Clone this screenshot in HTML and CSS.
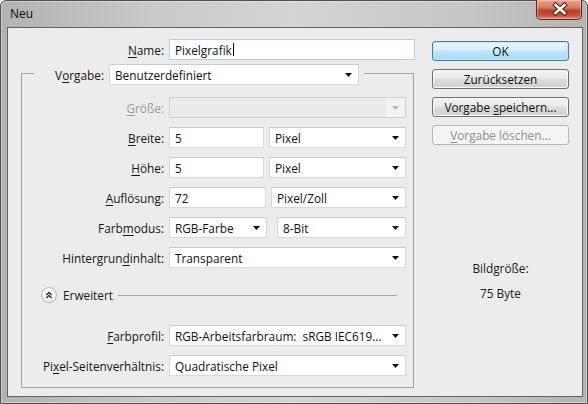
FILE: index.html
```html
<!DOCTYPE html>
<html lang="de">
<head>
<meta charset="utf-8">
<title>Neu</title>
<link rel="stylesheet" href="styles.css">
</head>
<body>
<div class="window">
  <div class="titlebar">
    <span class="title">Neu</span>
    <div class="close">
      <svg width="46" height="19" viewBox="0 0 46 19">
        <path d="M18.5 5 L27.5 13 M27.5 5 L18.5 13" stroke="#4b1f17" stroke-width="4.6" stroke-linecap="square" fill="none"/>
        <path d="M18.5 5 L27.5 13 M27.5 5 L18.5 13" stroke="#ffffff" stroke-width="2.6" stroke-linecap="square" fill="none"/>
      </svg>
    </div>
  </div>
  <div class="client">
    <div class="main">
      <div class="name-row">
        <span class="lbl name-lbl"><u>N</u>ame:</span>
        <div class="field input focused"><span>Pixelgrafik</span><span class="caret"></span></div>
      </div>
      <fieldset class="group">
        <legend class="legend">
          <div class="legend-inner">
            <span class="lbl legend-lbl">V<u>o</u>rgabe:</span>
            <div class="field select preset"><span>Benutzerdefiniert</span><svg class="arrow" width="7" height="4" viewBox="0 0 7 4"><polygon points="0,0 7,0 3.5,4" fill="#111"/></svg></div>
          </div>
        </legend>
        <div class="rows">
          <span class="lbl disabled"><u>G</u>röße:</span>
          <div class="field select dis"><span></span><span class="dis-arrow"><svg class="arrow" width="7" height="4" viewBox="0 0 7 4"><polygon points="0,0 7,0 3.5,4" fill="#b4b4b4"/></svg></span></div>

          <span class="lbl"><u>B</u>reite:</span>
          <div class="pair">
            <div class="field input w95">5</div>
            <div class="field select w137"><span>Pixel</span><svg class="arrow" width="7" height="4" viewBox="0 0 7 4"><polygon points="0,0 7,0 3.5,4" fill="#111"/></svg></div>
          </div>

          <span class="lbl"><u>H</u>öhe:</span>
          <div class="pair">
            <div class="field input w95">5</div>
            <div class="field select w137"><span>Pixel</span><svg class="arrow" width="7" height="4" viewBox="0 0 7 4"><polygon points="0,0 7,0 3.5,4" fill="#111"/></svg></div>
          </div>

          <span class="lbl"><u>A</u>uflösung:</span>
          <div class="pair">
            <div class="field input w97">72</div>
            <div class="field select w135"><span>Pixel/Zoll</span><svg class="arrow" width="7" height="4" viewBox="0 0 7 4"><polygon points="0,0 7,0 3.5,4" fill="#111"/></svg></div>
          </div>

          <span class="lbl">Farb<u>m</u>odus:</span>
          <div class="pair wide-gap">
            <div class="field select w98"><span>RGB-Farbe</span><svg class="arrow" width="7" height="4" viewBox="0 0 7 4"><polygon points="0,0 7,0 3.5,4" fill="#111"/></svg></div>
            <div class="field select w129"><span>8-Bit</span><svg class="arrow" width="7" height="4" viewBox="0 0 7 4"><polygon points="0,0 7,0 3.5,4" fill="#111"/></svg></div>
          </div>

          <span class="lbl">Hintergrun<u>d</u>inhalt:</span>
          <div class="field select"><span>Transparent</span><svg class="arrow" width="7" height="4" viewBox="0 0 7 4"><polygon points="0,0 7,0 3.5,4" fill="#111"/></svg></div>
        </div>

        <div class="advanced">
          <span class="toggle">
            <svg width="16" height="16" viewBox="0 0 16 16">
              <path d="M5.3 8 L8 5.5 L10.7 8 M5.3 11 L8 8.5 L10.7 11" stroke="#2a2a2a" stroke-width="1.3" fill="none"/>
            </svg>
          </span>
          <span class="adv-text">Erweitert</span>
          <span class="adv-line"></span>
        </div>

        <div class="rows rows2">
          <span class="lbl"><u>F</u>arbprofil:</span>
          <div class="field select"><span>RGB-Arbeitsfarbraum:&nbsp; sRGB IEC619...</span><svg class="arrow" width="7" height="4" viewBox="0 0 7 4"><polygon points="0,0 7,0 3.5,4" fill="#111"/></svg></div>

          <span class="lbl">Pi<u>x</u>el-Seitenverhältnis:</span>
          <div class="field select"><span>Quadratische Pixel</span><svg class="arrow" width="7" height="4" viewBox="0 0 7 4"><polygon points="0,0 7,0 3.5,4" fill="#111"/></svg></div>
        </div>
      </fieldset>
    </div>

    <div class="side">
      <div class="btn default"><span>OK</span></div>
      <div class="btn"><span>Zurücksetzen</span></div>
      <div class="btn"><span>Vorgabe <u>s</u>peichern...</span></div>
      <div class="btn disabled-btn"><span><u>V</u>orgabe löschen...</span></div>
      <div class="info">
        <div>Bildgröße:</div>
        <div class="info-val">75 Byte</div>
      </div>
    </div>
  </div>
</div>
</body>
</html>
```

FILE: styles.css
```css
* { box-sizing: border-box; }
html, body { margin: 0; padding: 0; }
body {
  width: 588px;
  height: 404px;
  overflow: hidden;
  background: #ffffff;
  font-family: "Open Sans", "Noto Sans", sans-serif;
  font-size: 11.8px;
  color: #1a1a1a;
}
u { text-decoration: underline; text-underline-offset: 2px; text-decoration-thickness: 1px; }

.window {
  position: relative;
  width: 588px;
  height: 404px;
  border: 1px solid #505050;
  border-radius: 6px 6px 0 0;
  background: linear-gradient(to right, #b2b2b2 0%, #c9c9c9 25%, #d4d4d4 50%, #c6c6c6 80%, #b4b4b4 100%);
  box-shadow: inset 0 0 0 1px rgba(255,255,255,0.35);
  display: flex;
  flex-direction: column;
}
.titlebar {
  height: 26px;
  display: flex;
  align-items: center;
  padding-left: 9px;
  padding-bottom: 1px;
}
.title { font-size: 12px; color: #0a0a0a; }
.close {
  position: absolute;
  top: -1px;
  right: 5px;
  width: 46px;
  height: 20px;
  border: 1px solid #5d281e;
  border-top: none;
  border-radius: 0 0 5px 5px;
  background: linear-gradient(#e6a493 0%, #d57a63 40%, #bf3f27 55%, #c4503a 80%, #dc8a70 100%);
  box-shadow: inset 0 0 0 1px rgba(255,220,210,0.45);
  overflow: hidden;
}
.close svg { display: block; }

.client {
  margin-left: 6px;
  width: 576px;
  height: 370px;
  border: 1px solid #626262;
  background: #ececec;
  display: flex;
}

.main { width: 407px; padding-top: 11px; }

.lbl { text-align: right; white-space: nowrap; color: #161616; }
.lbl.disabled { color: #9a9a9a; }

.name-row { display: flex; align-items: center; column-gap: 5px; height: 21px; }
.name-lbl { width: 156px; }
.name-row .field { width: 246px; }

.field {
  height: 21px;
  background: #ffffff;
  border: 1px solid #d9d9d9;
  border-top-color: #cacaca;
  display: flex;
  align-items: center;
  padding: 0 6px 0 5px;
  white-space: nowrap;
  color: #111;
}
.input.focused { border-color: #b3cfe9; padding-left: 5px; }
.caret { display: inline-block; width: 1px; height: 13px; background: #000; margin-left: 1px; }
.select { justify-content: space-between; }
.arrow { flex: none; display: block; }
.field.dis {
  background: #ebebeb;
  border-color: #cfcfcf;
  padding-right: 0;
}
.dis-arrow {
  height: 100%;
  width: 19px;
  background: #f3f3f3;
  display: flex;
  align-items: center;
  justify-content: center;
}

.group {
  margin: 1px 0 0 13px;
  padding: 0 0 11px 0;
  width: 393px;
  min-width: 0;
  border: 1px solid #a3a3a3;
}
.legend { margin-left: 12px; padding: 3px 5px 0 0; }
.legend-inner { display: flex; align-items: center; column-gap: 5px; }
.legend-lbl { width: 70px; }
.preset { width: 250px; }

.rows {
  display: grid;
  grid-template-columns: 142px 237px;
  grid-auto-rows: 21px;
  column-gap: 5px;
  row-gap: 9px;
  align-items: center;
  margin-top: 12px;
}
.rows2 { margin-top: 22px; }
.pair { display: flex; column-gap: 5px; }
.pair.wide-gap { column-gap: 10px; }
.w95 { width: 95px; }
.w97 { width: 97px; }
.w98 { width: 98px; }
.w129 { width: 129px; }
.w135 { width: 135px; }
.w137 { width: 137px; }

.advanced {
  margin-top: 19px;
  height: 16px;
  display: flex;
  align-items: center;
  padding-left: 19px;
  padding-right: 16px;
}
.toggle {
  width: 16px;
  height: 16px;
  border-radius: 50%;
  border: 1px solid #b9b9b9;
  background: radial-gradient(circle at 50% 35%, #ffffff 0%, #f4f4f4 55%, #dedede 100%);
  display: flex;
  align-items: center;
  justify-content: center;
  flex: none;
}
.toggle svg { display: block; margin: -1px; }
.adv-text { margin-left: 6px; }
.adv-line { flex: 1; height: 1px; background: #a9a9a9; margin-left: 5px; }

.side {
  margin-left: 17px;
  padding-top: 13px;
  width: 137px;
  display: flex;
  flex-direction: column;
  row-gap: 8px;
}
.btn {
  height: 20px;
  border: 1px solid #707070;
  border-radius: 3px;
  background: linear-gradient(#f2f2f2 0%, #ebebeb 45%, #dddddd 50%, #cfcfcf 100%);
  box-shadow: inset 0 0 0 1px #fbfbfb;
  display: flex;
  align-items: center;
  justify-content: center;
  color: #111;
  white-space: nowrap;
}
.btn.default {
  border-color: #3c7fb1;
  background: linear-gradient(#eaf6fd 0%, #d9f0fc 45%, #bee6fd 50%, #a7d9f5 100%);
  box-shadow: inset 0 0 0 1px #c4e5f6;
}
.btn.disabled-btn {
  border-color: #b5b8ba;
  background: #f4f4f4;
  box-shadow: none;
  color: #8d8d8d;
}
.info {
  margin-top: 107px;
  text-align: center;
  line-height: 16px;
}
.info-val { margin-top: 9px; }
```
